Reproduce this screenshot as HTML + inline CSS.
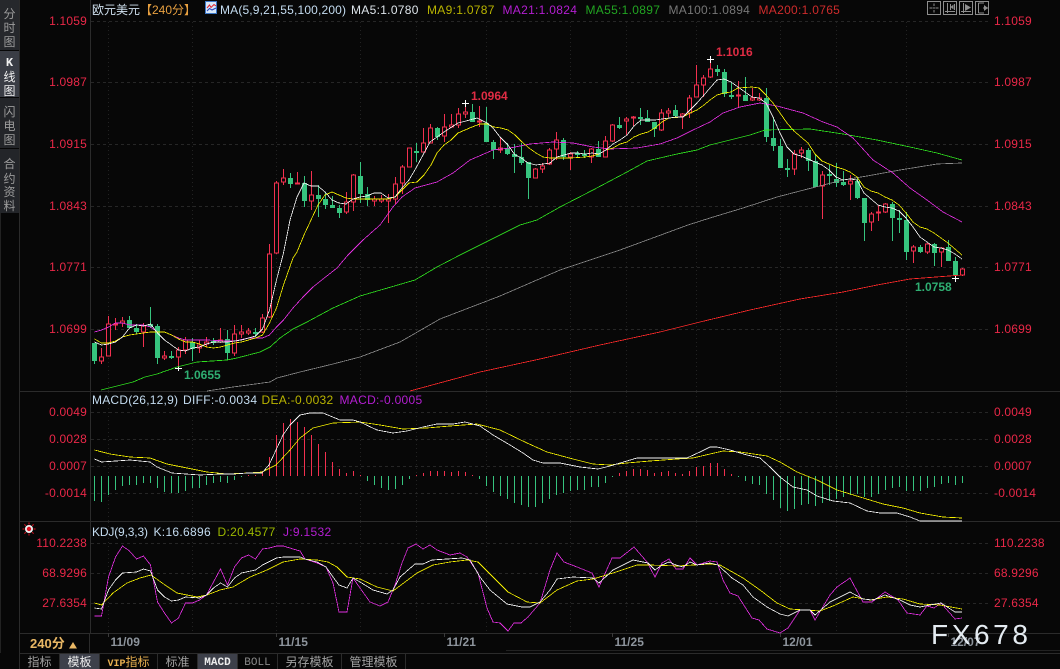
<!DOCTYPE html>
<html><head><meta charset="utf-8"><style>
html,body{margin:0;padding:0;background:#070707;width:1060px;height:669px;overflow:hidden}
svg{display:block;font-family:"Liberation Sans","Noto Sans CJK SC",sans-serif}
.ax{fill:#ea2848;font-size:12px;letter-spacing:.2px}
.e{text-anchor:end}
.cn{fill:#9c9c9c;font-size:12px;text-anchor:middle}
.ml{fill:none;stroke-width:.8;stroke-linejoin:round;shape-rendering:crispEdges}
.dt{fill:#8d949c;font-size:12px;font-weight:bold}
.tb{fill:#a2a2a2;font-size:12px;text-anchor:middle}
.hd{letter-spacing:.3px}
</style></head><body>
<svg width="1060" height="669" viewBox="0 0 1060 669" xmlns="http://www.w3.org/2000/svg">
<rect width="1060" height="669" fill="#070707"/>

<!-- sidebar -->
<g shape-rendering="crispEdges">
<rect x="0" y="0" width="19" height="50" fill="#26282c"/>
<rect x="0" y="51" width="19" height="46" fill="#3a3d45"/>
<rect x="0" y="98" width="19" height="50" fill="#232529"/>
<rect x="0" y="149" width="19" height="64" fill="#232529"/>
<rect x="0" y="213" width="1" height="440" fill="#222"/>
<rect x="19" y="0" width="1" height="669" fill="#2b2b2b"/>
<rect x="90" y="0" width="1" height="633" fill="#2b2b2b"/>
<rect x="20" y="391" width="1040" height="1" fill="#2b2b2b"/>
<rect x="20" y="521" width="1040" height="1" fill="#2b2b2b"/>
<rect x="20" y="633" width="1040" height="1" fill="#2b2b2b"/>
<rect x="506" y="650" width="554" height="1" fill="#222"/>
<rect x="20" y="653" width="1040" height="1" fill="#2b2b2b"/>
</g>
<text x="9.5" y="18" class="cn">分</text><text x="9.5" y="32" class="cn">时</text><text x="9.5" y="46" class="cn">图</text>
<text x="9.5" y="66" class="cn" style="fill:#f0f0f0;font-family:'Liberation Mono',monospace;font-weight:bold">K</text><text x="9.5" y="81" class="cn" style="fill:#f0f0f0">线</text><text x="9.5" y="95" class="cn" style="fill:#f0f0f0">图</text>
<text x="9.5" y="116" class="cn">闪</text><text x="9.5" y="130" class="cn">电</text><text x="9.5" y="144" class="cn">图</text>
<text x="9.5" y="168" class="cn">合</text><text x="9.5" y="183" class="cn">约</text><text x="9.5" y="196" class="cn">资</text><text x="9.5" y="210" class="cn">料</text>

<!-- grid -->
<g stroke="#262626" stroke-width="1" stroke-dasharray="3 3" shape-rendering="crispEdges" fill="none">
<path d="M91 21.5H988M91 82.5H988M91 144.5H988M91 206.5H988M91 267.5H988M91 329.5H988"/>
<path d="M91 412.5H988M91 439.5H988M91 466.5H988M91 493.5H988"/>
<path d="M91 543.5H988M91 573.5H988M91 603.5H988"/>
</g>
<g stroke="#222" stroke-width="1" stroke-dasharray="1 3" shape-rendering="crispEdges" fill="none">
<path d="M108.5 22V391M192.5 22V391M276.5 22V391M360.5 22V391M416.5 22V391M486.5 22V391M570.5 22V391M626.5 22V391M696.5 22V391M780.5 22V391M836.5 22V391M906.5 22V391"/>
<path d="M108.5 392V521M192.5 392V521M276.5 392V521M360.5 392V521M416.5 392V521M486.5 392V521M570.5 392V521M626.5 392V521M696.5 392V521M780.5 392V521M836.5 392V521M906.5 392V521"/>
<path d="M108.5 522V633M192.5 522V633M276.5 522V633M360.5 522V633M416.5 522V633M486.5 522V633M570.5 522V633M626.5 522V633M696.5 522V633M780.5 522V633M836.5 522V633M906.5 522V633"/>
</g>
<path d="M108.5 633V637M276.5 633V637M444.5 633V637M612.5 633V637M780.5 633V637M948.5 633V637" stroke="#3a3a3a" shape-rendering="crispEdges"/>

<!-- candles -->
<g shape-rendering="crispEdges" fill="none">
<path stroke="#f2304f" d="M101.5 348V364M108.5 316V356M115.5 318V330M122.5 317V327M143.5 323V347M164.5 351V360M178.5 347V368M185.5 337V354M199.5 340V353M206.5 337V347M220.5 328V343M234.5 325V356M241.5 325V338M248.5 328V335M262.5 314V333M269.5 244V318M276.5 181V254M283.5 169V185M297.5 172V184M311.5 171V210M346.5 192V214M353.5 174V211M374.5 196V206M381.5 195V203M388.5 194V223M395.5 177V204M402.5 165V194M409.5 148V167M423.5 128V152M430.5 124V143M444.5 114V142M451.5 114V127M458.5 108V128M465.5 103V118M479.5 106V127M500.5 137V153M535.5 168V178M542.5 163V173M549.5 148V165M556.5 132V160M570.5 152V170M591.5 148V163M605.5 136V157M612.5 124V142M626.5 117V135M633.5 116V126M661.5 109V131M668.5 108V117M682.5 113V129M689.5 95V118M696.5 65V97M703.5 75V97M710.5 59V78M738.5 81V107M752.5 88V101M759.5 93V101M794.5 150V175M801.5 147V158M822.5 171V219M850.5 175V200M871.5 212V231M878.5 205V221M885.5 203V213M913.5 245V263M927.5 243V254M941.5 247V267M962.5 268V276"/>
<path stroke="#f2304f" fill="#070707" d="M99.5 357h4v4h-4zM106.5 324h4v32h-4zM113.5 324h4v1h-4zM120.5 321h4v2h-4zM141.5 326h4v6h-4zM162.5 356h4v2h-4zM176.5 350h4v7h-4zM183.5 340h4v10h-4zM197.5 345h4v3h-4zM204.5 342h4v2h-4zM218.5 340h4v2h-4zM232.5 334h4v19h-4zM239.5 332h4v2h-4zM246.5 331h4v2h-4zM260.5 318h4v14h-4zM267.5 254h4v63h-4zM274.5 183h4v70h-4zM281.5 178h4v4h-4zM295.5 183h4v1h-4zM309.5 195h4v6h-4zM344.5 202h4v10h-4zM351.5 175h4v27h-4zM372.5 199h4v2h-4zM379.5 199h4v2h-4zM386.5 199h4v2h-4zM393.5 184h4v15h-4zM400.5 167h4v16h-4zM407.5 148h4v19h-4zM421.5 143h4v9h-4zM428.5 128h4v15h-4zM442.5 127h4v9h-4zM449.5 125h4v2h-4zM456.5 114h4v11h-4zM463.5 112h4v2h-4zM477.5 121h4v1h-4zM498.5 148h4v2h-4zM533.5 169h4v9h-4zM540.5 166h4v3h-4zM547.5 150h4v14h-4zM554.5 140h4v9h-4zM568.5 154h4v3h-4zM589.5 149h4v8h-4zM603.5 141h4v16h-4zM610.5 125h4v16h-4zM624.5 119h4v2h-4zM631.5 117h4v1h-4zM659.5 113h4v17h-4zM666.5 111h4v2h-4zM680.5 114h4v2h-4zM687.5 98h4v15h-4zM694.5 85h4v12h-4zM701.5 78h4v7h-4zM708.5 69h4v8h-4zM736.5 95h4v1h-4zM750.5 98h4v2h-4zM757.5 98h4v2h-4zM792.5 154h4v15h-4zM799.5 150h4v3h-4zM820.5 175h4v11h-4zM848.5 181h4v3h-4zM869.5 214h4v8h-4zM876.5 212h4v1h-4zM883.5 204h4v8h-4zM911.5 247h4v4h-4zM925.5 244h4v8h-4zM939.5 248h4v4h-4zM960.5 269h4v6h-4z"/>
<path stroke="#36c47e" d="M94.5 343V364M129.5 316V328M136.5 324V334M150.5 307V328M157.5 324V364M171.5 351V359M192.5 338V361M213.5 338V345M227.5 330V360M255.5 328V337M290.5 173V188M304.5 176V207M318.5 185V217M325.5 192V209M332.5 196V208M339.5 205V218M360.5 162V203M367.5 187V206M416.5 143V162M437.5 127V140M472.5 104V122M486.5 107V142M493.5 140V159M507.5 143V155M514.5 144V173M521.5 143V165M528.5 162V199M563.5 138V160M577.5 151V157M584.5 150V158M598.5 141V157M619.5 117V129M640.5 108V125M647.5 110V122M654.5 122V137M675.5 105V117M717.5 65V76M724.5 69V97M731.5 82V99M745.5 77V101M766.5 88V142M773.5 117V151M780.5 139V168M787.5 159V177M808.5 148V171M815.5 155V187M829.5 165V185M836.5 163V187M843.5 171V186M857.5 177V199M864.5 198V241M892.5 202V241M899.5 210V233M906.5 212V260M920.5 245V253M934.5 243V266M948.5 240V261M955.5 257V276"/>
<path stroke="#36c47e" stroke-width="5" d="M94.5 343V361M129.5 320V328M136.5 328V332M150.5 324V327M157.5 326V358M171.5 356V358M192.5 342V349M213.5 341V343M227.5 339V353M255.5 332V334M290.5 178V184M304.5 183V201M318.5 195V199M325.5 199V205M332.5 205V208M339.5 208V213M360.5 176V194M367.5 194V200M416.5 151V153M437.5 128V137M472.5 112V122M486.5 123V142M493.5 142V150M507.5 148V154M514.5 154V157M521.5 157V163M528.5 162V178M563.5 140V157M577.5 153V155M584.5 154V156M598.5 149V157M619.5 125V128M640.5 117V119M647.5 118V122M654.5 122V129M675.5 110V116M717.5 69V72M724.5 72V94M731.5 95V97M745.5 95V101M766.5 98V137M773.5 138V146M780.5 146V168M787.5 168V170M808.5 150V161M815.5 161V187M829.5 174V176M836.5 179V183M843.5 182V185M857.5 181V198M864.5 198V223M892.5 204V218M899.5 218V220M906.5 220V252M920.5 247V252M934.5 244V253M948.5 247V261M955.5 261V275"/>
<path stroke="#fff" d="M175 368.5H182M178.5 366V371M462 103.5H469M465.5 100V107M707 59.5H714M710.5 56V63M952 278.5H959M955.5 275V282"/>
</g>

<!-- MA lines -->
<polyline class="ml" stroke="#ff2a2a" points="410,391 480,372 540,359 600,345 660,332 700,322 750,310 800,299 843,292 877,285 910,279 962,275"/>
<polyline class="ml" stroke="#8a8a8a" points="207,391 233,387 270,382 277,378 300,372 333,364 360,357 400,342 440,319 500,296 560,270 620,250 688,225 710,218 743,208 777,197 800,191 843,180 867,176 900,170 937,164 962,163"/>
<polyline class="ml" stroke="#2fe01f" points="101,390 113,387 133,382 145,377 157,374 177,367 197,362 227,360 237,358 260,352 270,347 280,338 293,329 307,322 333,308 360,296 415,280 437,267 460,255 520,225 537,220 560,207 593,190 627,172 647,161 677,154 697,150 710,145 730,140 750,135 765,130 810,129 843,134 877,140 910,147 937,153 962,160"/>
<polyline class="ml" stroke="#e22fe0" points="94.5,332 101.5,330 108.5,327 115.5,323 122.5,323 129.5,325 143.5,325 150.5,327 157.5,332 164.5,332 171.5,335 178.5,338 185.5,340 206.5,340 227.5,341 234.5,341 248.5,338 262.5,338 269.5,335 276.5,327 283.5,320 293,308 303,297 313,287 323,279 337,268 348,255 363,240 380,225 393,207 402,197 415,188 437,182 453,173 470,160 493,150 510,148 530,144 553,142 573,143 593,147 610,149 637,148 660,144 677,138 693,130 710,122 723,113 740,107 760,103 777,106 803,113 823,122 837,127 853,138 873,160 893,173 910,188 927,200 943,212 962,222"/>
<polyline class="ml" stroke="#f5f000" points="94.5,339 101.5,343 108.5,343 115.5,341 122.5,337 129.5,335 136.5,334 143.5,333 150.5,332 157.5,332 164.5,332 171.5,335 178.5,339 185.5,342 192.5,342 199.5,344 206.5,347 213.5,348 220.5,347 227.5,345 234.5,343 241.5,342 248.5,340 255.5,338 262.5,335 269.5,323 276.5,308 283.5,285 293,258 297,252 304,235 311,220 318,205 325,195 332,192 339,195 346,198 353,199 388,199 395,197 402,190 409,183 417,182 424,175 431,165 437,153 444,145 451,140 458,133 465,130 472,127 480,124 487,124 494,127 501,128 508,130 515,135 522,142 529,148 536,153 543,157 550,158 571,158 585,157 592,156 599,154 606,150 613,148 620,144 627,142 634,137 641,134 648,132 655,128 662,122 669,118 683,117 690,113 697,110 704,105 710,100 717,95 724,93 731,92 738,88 752,87 759,88 766,95 773,103 780,113 787,123 794,131 801,137 808,143 815,154 822,161 829,164 836,167 843,169 850,172 857,177 864,187 871,191 878,193 885,197 892,200 899,205 906,213 913,222 920,227 927,229 934,233 941,238 948,243 955,249 962,255"/>
<polyline class="ml" stroke="#f4f4f4" points="94.5,342 101.5,345 108.5,344 115.5,342 122.5,337 129.5,328 136.5,325 143.5,326 150.5,324 157.5,333 164.5,340 171.5,345 178.5,350 185.5,351 192.5,348 199.5,347 206.5,344 213.5,342 220.5,342 227.5,342 234.5,341 241.5,340 248.5,338 255.5,336 262.5,329 269.5,310 276.5,280 283.5,253 290,220 297,197 304,183 311,186 318,186 325,192 332,200 339,203 346,204 353,199 360,197 367,196 374,193 381,193 388,198 395,197 402,188 409,180 416,168 423,155 430,142 444,132 458,123 466,121 477,118 487,123 493,128 500,137 508,145 515,155 520,157 528,163 536,165 543,164 550,163 557,157 564,155 571,153 578,153 585,154 592,153 599,154 606,150 613,144 620,140 627,135 634,126 641,120 648,120 655,120 662,119 669,118 676,117 683,117 690,110 697,103 704,95 710,88 717,80 724,79 731,82 738,87 745,92 752,97 759,98 766,103 773,117 780,133 787,147 794,154 801,156 808,159 815,162 822,165 829,170 836,177 843,180 850,179 857,180 864,193 871,199 878,205 885,207 892,208 899,211 906,218 913,227 920,237 927,242 934,247 941,248 948,250 955,254 962,259"/>

<!-- MACD hist -->
<g shape-rendering="crispEdges" fill="none">
<path stroke="#f2304f" d="M248.5 476V475M255.5 476V475M262.5 476V471M269.5 476V457M276.5 476V435M283.5 476V423M290.5 476V419M297.5 476V422M304.5 476V427M311.5 476V435M318.5 476V444M325.5 476V452M332.5 476V462M339.5 476V469M346.5 476V473M353.5 476V471M360.5 476V475M416.5 476V475M423.5 476V473M430.5 476V471M437.5 476V471M444.5 476V471M451.5 476V472M458.5 476V471M465.5 476V472M472.5 476V475M619.5 476V473M626.5 476V471M633.5 476V469M640.5 476V469M647.5 476V470M654.5 476V473M661.5 476V472M668.5 476V471M675.5 476V473M682.5 476V474M689.5 476V471M696.5 476V467M703.5 476V466M710.5 476V463M717.5 476V463M724.5 476V469M731.5 476V474"/>
<path stroke="#36c47e" d="M94.5 476V501M101.5 476V502M108.5 476V495M115.5 476V490M122.5 476V486M129.5 476V485M136.5 476V485M143.5 476V483M150.5 476V483M157.5 476V488M164.5 476V492M171.5 476V493M178.5 476V493M185.5 476V491M192.5 476V488M199.5 476V488M206.5 476V485M213.5 476V483M220.5 476V482M227.5 476V483M234.5 476V480M241.5 476V477M367.5 476V481M374.5 476V485M381.5 476V488M388.5 476V490M395.5 476V489M402.5 476V485M409.5 476V479M479.5 476V479M486.5 476V486M493.5 476V492M500.5 476V496M507.5 476V499M514.5 476V503M521.5 476V505M528.5 476V507M535.5 476V507M542.5 476V503M549.5 476V499M556.5 476V495M563.5 476V493M570.5 476V491M577.5 476V490M584.5 476V490M591.5 476V487M598.5 476V487M605.5 476V483M612.5 476V477M738.5 476V477M745.5 476V481M752.5 476V484M759.5 476V485M766.5 476V494M773.5 476V500M780.5 476V508M787.5 476V511M794.5 476V509M801.5 476V505M808.5 476V504M815.5 476V506M822.5 476V503M829.5 476V501M836.5 476V499M843.5 476V497M850.5 476V495M857.5 476V494M864.5 476V497M871.5 476V497M878.5 476V494M885.5 476V490M892.5 476V488M899.5 476V487M906.5 476V491M913.5 476V491M920.5 476V491M927.5 476V488M934.5 476V487M941.5 476V484M948.5 476V483M955.5 476V485M962.5 476V483"/>
</g>
<polyline class="ml" stroke="#f5f000" points="94.5,450 110,454 130,457 150,458 167,464 187,468 207,472 227,474 248,473 262,472 276,465 290,450 300,438 313,428 333,423 360,422 380,425 403,429 427,428 450,426 477,424 500,430 527,443 547,452 573,459 593,464 610,465 627,463 650,461 677,459 693,458 710,454 723,451 740,452 767,456 780,462 797,472 817,480 837,490 860,497 883,504 903,508 920,513 943,517 962,518"/>
<polyline class="ml" stroke="#f4f4f4" points="94.5,459 101.5,462 116,461 130,460 150,462 157,467 172,473 186,474 200,475 220,474 234,474 248,473 262,473 269,465 276,450 283,435 290,425 300,415 310,413 323,413 340,420 353,420 360,422 377,430 393,433 407,431 423,427 437,424 453,424 465,422 480,426 493,435 510,445 523,453 533,460 543,463 560,463 580,467 598,469 610,466 627,461 637,458 650,458 667,458 687,458 700,452 710,447 717,447 730,450 747,455 760,458 770,467 780,477 793,487 807,490 817,496 833,501 850,503 867,511 880,513 897,513 910,517 920,521 940,521 962,521"/>

<!-- KDJ -->
<polyline class="ml" stroke="#e22fe0" points="94.5,616 101.5,616 108.5,577 115.5,557 122.5,546 129.5,551 136.5,559 143.5,556 150.5,565 157.5,602 164.5,613 171.5,623 178.5,618 185.5,603 192.5,603 199.5,600 206.5,595 213.5,582 220.5,569 227.5,585 234.5,567 241.5,558 248.5,555 255.5,559 262.5,549 269.5,548 276.5,546 283.5,546 293,549 300,551 305,559 317,563 326,567 333,583 339,612 347,612 353,578 360,588 370,602 380,606 388,602 395,585 402,563 408,548 416,544 423,549 430,545 437,550 450,555 460,553 467,557 478,573 487,608 493,622 500,623 508,631 514,623 521,623 528,617 540,603 550,570 557,553 564,562 577,567 592,573 599,587 612,558 620,558 634,547 647,562 655,577 662,563 669,559 676,569 683,569 690,558 697,565 710,561 717,562 723,580 730,593 738,596 752,618 759,620 767,629 780,633 788,628 800,610 810,610 815,620 830,595 837,587 850,578 863,602 872,602 885,592 898,600 907,613 920,615 927,606 934,608 941,603 955,619 962,618"/>
<polyline class="ml" stroke="#f5f000" points="94.5,603 101.5,605 113,593 127,583 140,578 151,575 165,585 177,593 197,597 207,595 220,590 233,587 250,577 267,570 283,562 300,559 317,560 328,562 337,567 347,577 360,579 377,587 393,591 417,573 433,565 450,562 467,560 478,562 493,577 508,592 527,602 540,603 557,590 577,581 593,579 613,573 637,565 650,565 677,566 710,564 720,565 743,578 760,590 777,603 790,609 820,611 833,606 853,597 870,600 887,597 903,599 920,604 940,605 962,609"/>
<polyline class="ml" stroke="#f4f4f4" points="94.5,608 101.5,609 108.5,590 115.5,580 122.5,573 136.5,572 143.5,569 150.5,571 157.5,590 164.5,597 171.5,601 178.5,600 185.5,597 199.5,598 206.5,595 213.5,588 220.5,583 227.5,587 234.5,578 241.5,573 255.5,570 262.5,565 276.5,558 283.5,557 300,557 305,559 317,562 326,567 333,577 339,585 347,588 353,578 360,582 373,590 387,594 393,590 400,577 415,564 423,564 432,560 447,559 462,558 470,560 480,577 490,590 507,604 522,607 530,607 540,602 550,590 557,579 573,577 593,578 599,583 613,570 633,560 648,563 655,570 662,565 669,562 676,565 683,567 690,562 697,565 710,563 718,565 732,578 743,585 753,597 767,607 780,614 788,616 800,610 810,610 815,615 830,602 850,592 863,599 873,600 885,595 900,600 910,605 920,607 930,605 941,603 955,612 962,612"/>

<!-- axes left -->
<text x="87" y="25" class="ax e">1.1059</text>
<text x="87" y="86" class="ax e">1.0987</text>
<text x="87" y="148" class="ax e">1.0915</text>
<text x="87" y="210" class="ax e">1.0843</text>
<text x="87" y="271" class="ax e">1.0771</text>
<text x="87" y="333" class="ax e">1.0699</text>
<text x="87" y="416" class="ax e">0.0049</text>
<text x="87" y="443" class="ax e">0.0028</text>
<text x="87" y="470" class="ax e">0.0007</text>
<text x="87" y="497" class="ax e">-0.0014</text>
<text x="87" y="547" class="ax e">110.2238</text>
<text x="87" y="577" class="ax e">68.9296</text>
<text x="87" y="607" class="ax e">27.6354</text>
<!-- axes right -->
<text x="994" y="25" class="ax">1.1059</text>
<text x="994" y="86" class="ax">1.0987</text>
<text x="994" y="148" class="ax">1.0915</text>
<text x="994" y="210" class="ax">1.0843</text>
<text x="994" y="271" class="ax">1.0771</text>
<text x="994" y="333" class="ax">1.0699</text>
<text x="994" y="416" class="ax">0.0049</text>
<text x="994" y="443" class="ax">0.0028</text>
<text x="994" y="470" class="ax">0.0007</text>
<text x="994" y="497" class="ax">-0.0014</text>
<text x="994" y="547" class="ax">110.2238</text>
<text x="994" y="577" class="ax">68.9296</text>
<text x="994" y="607" class="ax">27.6354</text>

<!-- extremes -->
<g font-size="12" font-weight="bold">
<text x="471" y="100" fill="#e02c44">1.0964</text>
<text x="716" y="56" fill="#e02c44">1.1016</text>
<text x="915" y="291" fill="#2fae72">1.0758</text>
<text x="184" y="379" fill="#2fae72">1.0655</text>
</g>

<!-- headers -->
<g font-size="12">
<text x="92" y="14" fill="#cfe0ee">欧元美元</text>
<text x="140" y="14" fill="#e8a040">【240分】</text>
<text x="220" y="14" fill="#c4dcf0" textLength="126" lengthAdjust="spacing">MA(5,9,21,55,100,200)</text>
<text x="351" y="14" class="hd" fill="#dde4ea">MA5:1.0780</text>
<text x="427" y="14" class="hd" fill="#b9b400">MA9:1.0787</text>
<text x="502.5" y="14" class="hd" fill="#b41ed2">MA21:1.0824</text>
<text x="585.5" y="14" class="hd" fill="#22a522">MA55:1.0897</text>
<text x="668.5" y="14" class="hd" fill="#777">MA100:1.0894</text>
<text x="758.5" y="14" class="hd" fill="#cf2c2c">MA200:1.0765</text>

<text x="92" y="404" textLength="86" lengthAdjust="spacing" fill="#c4dcf0">MACD(26,12,9)</text>
<text x="183" y="404" class="hd" fill="#c4dcf0">DIFF:-0.0034</text>
<text x="261.5" y="404" class="hd" fill="#b9b400">DEA:-0.0032</text>
<text x="339.5" y="404" class="hd" fill="#b41ed2">MACD:-0.0005</text>

<text x="92" y="536" textLength="56" lengthAdjust="spacing" fill="#c4dcf0">KDJ(9,3,3)</text>
<text x="153.5" y="536" class="hd" fill="#c4dcf0">K:16.6896</text>
<text x="217.5" y="536" class="hd" fill="#9cb800">D:20.4577</text>
<text x="283" y="536" class="hd" fill="#b41ed2">J:9.1532</text>
</g>

<!-- MA icon -->
<g shape-rendering="crispEdges">
<rect x="205.5" y="1.5" width="11" height="12" fill="#d8e8f8" stroke="#3c78c8"/>
</g>
<path d="M207 8L209.5 5L211 7.5L214 4.5L216 6" fill="none" stroke="#e0202c" stroke-width="1"/>
<path d="M207 11L209.5 8.5L212 10L216 8" fill="none" stroke="#2040c0" stroke-width="1"/>

<!-- top right icons -->
<g fill="none" stroke="#8e8e8e" shape-rendering="crispEdges">
<rect x="927.5" y="1.5" width="13" height="13"/>
<rect x="943.5" y="1.5" width="13" height="13"/>
<rect x="959.5" y="1.5" width="13" height="13"/>
<rect x="975.5" y="1.5" width="13" height="13"/>
<path d="M934 3.5V6M934 10V12.5M929.5 8H932M936 8H938.5M932.5 8H935.5"/>
<path d="M947.5 3V13M945 11.5H955M950.5 4V10M954.5 4V10"/>
<path d="M963.5 3V13M961 11.5H971"/>
<path d="M978.5 3V13M978.5 3H984M978.5 13H984M983 8H988"/>
</g>
<path d="M953.5 4.5L950.5 7L953.5 9.5Z" fill="#8e8e8e"/>
<path d="M965 4L971 7.5L965 11Z" fill="#8e8e8e"/>
<path d="M984 5L988 8L984 11Z" fill="#8e8e8e"/>

<!-- KDJ dot icon -->
<circle cx="29" cy="529" r="4" fill="#f0f0f0"/>
<circle cx="29" cy="529" r="2.2" fill="#e01020"/>
<path d="M29 522.5V524.5M29 533.5V535.5M22.5 529H24.5M33.5 529H35.5M24.4 524.4L25.8 525.8M33.6 524.4L32.2 525.8M24.4 533.6L25.8 532.2M33.6 533.6L32.2 532.2" stroke="#e01020" fill="none"/>

<!-- date row -->
<rect x="89" y="633" width="1" height="20" fill="#2b2b2b" shape-rendering="crispEdges"/>
<text x="30" y="648" font-size="13" font-weight="bold" fill="#eab865">240分</text>
<path d="M69 648.5L73 642L77 648.5Z" fill="#eab865"/>
<text x="110.5" y="646" class="dt">11/09</text>
<text x="278.5" y="646" class="dt">11/15</text>
<text x="446.5" y="646" class="dt">11/21</text>
<text x="614.5" y="646" class="dt">11/25</text>
<text x="782.5" y="646" class="dt">12/01</text>
<text x="950.5" y="646" class="dt">12/07</text>

<!-- bottom tabs -->
<g shape-rendering="crispEdges">
<rect x="60" y="654" width="39" height="15" fill="#3d404a"/>
<rect x="198" y="654" width="39" height="15" fill="#3d404a"/>
<path d="M59.5 654V669M99.5 654V669M157.5 654V669M197.5 654V669M237.5 654V669M277.5 654V669M341.5 654V669M405.5 654V669" stroke="#2b2b2b"/>
</g>
<text x="39.5" y="666" class="tb">指标</text>
<text x="79.5" y="666" class="tb" style="fill:#eee">模板</text>
<text x="128.5" y="666" class="tb" style="fill:#e8b050"><tspan font-family="Liberation Mono" font-size="10" font-weight="bold">VIP</tspan>指标</text>
<text x="177.5" y="666" class="tb">标准</text>
<text x="217.5" y="665" text-anchor="middle" font-size="11" font-weight="bold" fill="#eee" font-family="Liberation Mono">MACD</text>
<text x="257.5" y="665" text-anchor="middle" font-size="11" fill="#8a8a8a" font-family="Liberation Mono">BOLL</text>
<text x="309.5" y="666" class="tb">另存模板</text>
<text x="373.5" y="666" class="tb">管理模板</text>

<!-- watermark -->
<text x="931" y="644" font-size="28" letter-spacing="3.6" fill="#e4ebf1">FX678</text>
</svg>
</body></html>
